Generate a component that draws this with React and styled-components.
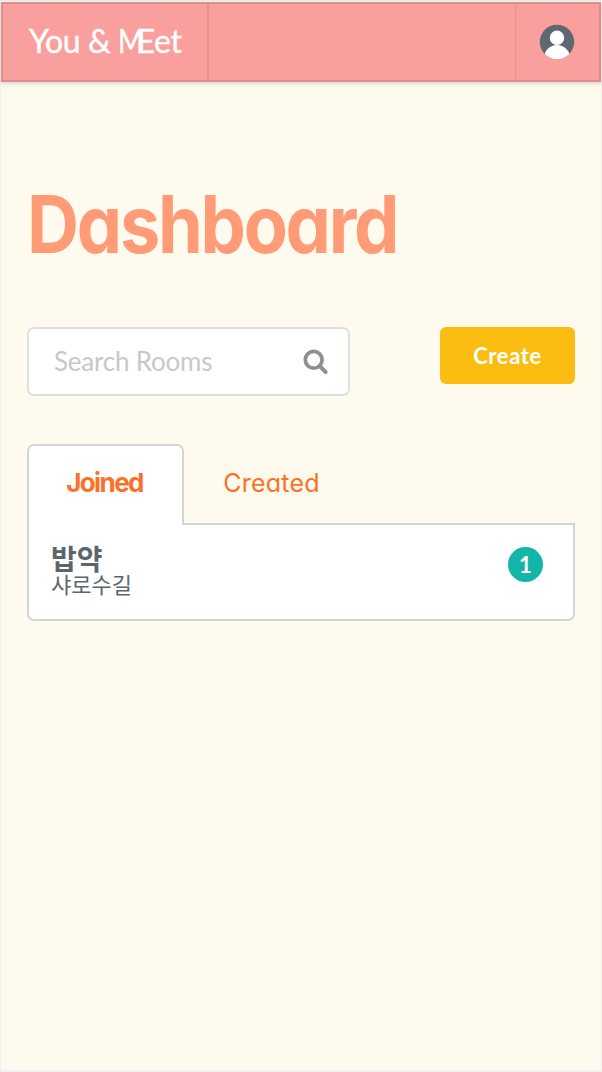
import React from "react";
import styled, { createGlobalStyle } from "styled-components";

const GlobalStyle = createGlobalStyle`
  *, *::before, *::after { box-sizing: border-box; }
  body { margin: 0; background: #fffaee; font-family: Lato, "Noto Sans CJK KR", sans-serif; color: #5b656e; }
  button, input { font: inherit; }
`;

const Page = styled.div`
  height: 1072px;
  border: 1px solid #f1f1f3;
  border-top-color: #e9e9ea;
  border-bottom-width: 2px;
  padding-top: 1px;
  background: #fffaee;
`;

const Header = styled.header`
  display: flex;
  height: 80px;
  border: 2px solid #dc8f8d;
  background: #f99f9d;
  box-shadow: 0 2px 4px rgba(34, 36, 38, 0.15);
`;

const Brand = styled.div`
  display: flex;
  align-items: center;
  width: 206px;
  padding: 0 0 3px 26px;
  border-right: 2px solid #e49390;
  color: #fff;
  font-size: 32px;
  line-height: 40px;
  letter-spacing: -0.4px;
  -webkit-text-stroke: 0.4px #fff;
  white-space: pre;
`;

const Tight = styled.span`
  display: inline-block;
  width: 18.5px;
  transform: scaleX(0.86);
  transform-origin: 0 50%;
`;

const UserMenu = styled.div`
  display: flex;
  align-items: center;
  margin-left: auto;
  width: 84px;
  padding-left: 23px;
  border-left: 1px solid #e49390;
`;

const Content = styled.main`
  padding: 98px 26px 0;
`;

const Title = styled.h1`
  width: max-content;
  margin: 0;
  height: 88px;
  font: 700 80px/88px Inter, sans-serif;
  font-feature-settings: "cv11";
  letter-spacing: -2.5px;
  color: #ff9b76;
  transform: scaleX(0.9);
  transform-origin: 0 50%;
`;

const Toolbar = styled.div`
  display: flex;
  justify-content: space-between;
  align-items: flex-start;
  margin-top: 59px;
`;

const SearchBox = styled.label`
  display: flex;
  align-items: center;
  width: 323px;
  height: 69px;
  padding: 0 20px 0 25px;
  border: 2px solid #dee0e0;
  border-radius: 7px;
  background: #fff;
`;

const SearchInput = styled.input`
  flex: 1;
  min-width: 0;
  padding: 0 0 2px;
  border: 0;
  outline: 0;
  background: none;
  font-size: 26px;
  letter-spacing: -0.2px;
  &::placeholder { color: #c8c8c8; opacity: 1; }
`;

const CreateButton = styled.button`
  width: 135px;
  height: 57px;
  padding: 0;
  border: 0;
  border-radius: 6px;
  background: #fbbd11;
  color: #fff;
  font-size: 22px;
  font-weight: 700;
  letter-spacing: 0.6px;
`;

const Tabs = styled.nav`
  display: flex;
  margin-top: 48px;
`;

const Tab = styled.button`
  width: ${(p) => p.$width}px;
  height: ${(p) => (p.$active ? 81 : 79)}px;
  padding: ${(p) => (p.$active ? "0 2px 6px 0" : "0 0 3px")};
  border: 2px solid ${(p) => (p.$active ? "#d3d4d5" : "transparent")};
  border-bottom: 0;
  border-radius: 7px 7px 0 0;
  background: ${(p) => (p.$active ? "#fff" : "transparent")};
  color: #fa7129;
  font-family: Inter, sans-serif;
  font-feature-settings: "cv11";
  font-size: ${(p) => (p.$active ? 26 : 25)}px;
  font-weight: ${(p) => (p.$active ? 700 : 400)};
  letter-spacing: ${(p) => p.$tracking}px;
`;

const TabRule = styled.div`
  flex: 1;
  display: flex;
  border-bottom: 2px solid #d3d4d5;
  height: 81px;
`;

const Panel = styled.section`
  display: flex;
  justify-content: space-between;
  align-items: flex-start;
  height: 96px;
  padding: 19px 30px 0 22px;
  border: 2px solid #d3d4d5;
  border-top: 0;
  border-radius: 0 0 7px 7px;
  background: #fff;
`;

const RoomName = styled.div`
  font-size: 28px;
  font-weight: 700;
  line-height: 30px;
`;

const RoomPlace = styled.div`
  font-size: 22px;
  line-height: 21px;
`;

const Count = styled.span`
  display: grid;
  place-items: center;
  width: 35px;
  height: 35px;
  margin-top: 3px;
  border-radius: 50%;
  background: #13b5a8;
  color: #fff;
  font-size: 22px;
  font-weight: 700;
`;

function Avatar() {
  return (
    <svg width="36" height="36" viewBox="0 0 36 36">
      <clipPath id="disc"><circle cx="18" cy="18" r="17.2" /></clipPath>
      <circle cx="18" cy="18" r="17.2" fill="#5d6870" />
      <g clipPath="url(#disc)" fill="#fff">
        <circle cx="18" cy="13.8" r="7.2" />
        <ellipse cx="18" cy="34" rx="13" ry="13.1" />
      </g>
    </svg>
  );
}

function SearchIcon() {
  return (
    <svg width="25" height="26" viewBox="0 0 25 26" fill="none" stroke="#8f8f8f">
      <circle cx="10.7" cy="10.8" r="8.4" strokeWidth="3.7" />
      <path d="M16.8 17.2 22.6 23" strokeWidth="4" strokeLinecap="round" />
    </svg>
  );
}

export default function App() {
  return (
    <>
      <GlobalStyle />
      <Page>
        <Header>
          <Brand>You &amp; <Tight>M</Tight>Eet</Brand>
          <UserMenu><Avatar /></UserMenu>
        </Header>
        <Content>
          <Title>Dashboard</Title>
          <Toolbar>
            <SearchBox>
              <SearchInput placeholder="Search Rooms" />
              <SearchIcon />
            </SearchBox>
            <CreateButton>Create</CreateButton>
          </Toolbar>
          <Tabs>
            <Tab $active $width={157} $tracking={-1.6}>Joined</Tab>
            <TabRule><Tab $width={175} $tracking={0.2}>Created</Tab></TabRule>
          </Tabs>
          <Panel>
            <div>
              <RoomName>밥약</RoomName>
              <RoomPlace>샤로수길</RoomPlace>
            </div>
            <Count>1</Count>
          </Panel>
        </Content>
      </Page>
    </>
  );
}
